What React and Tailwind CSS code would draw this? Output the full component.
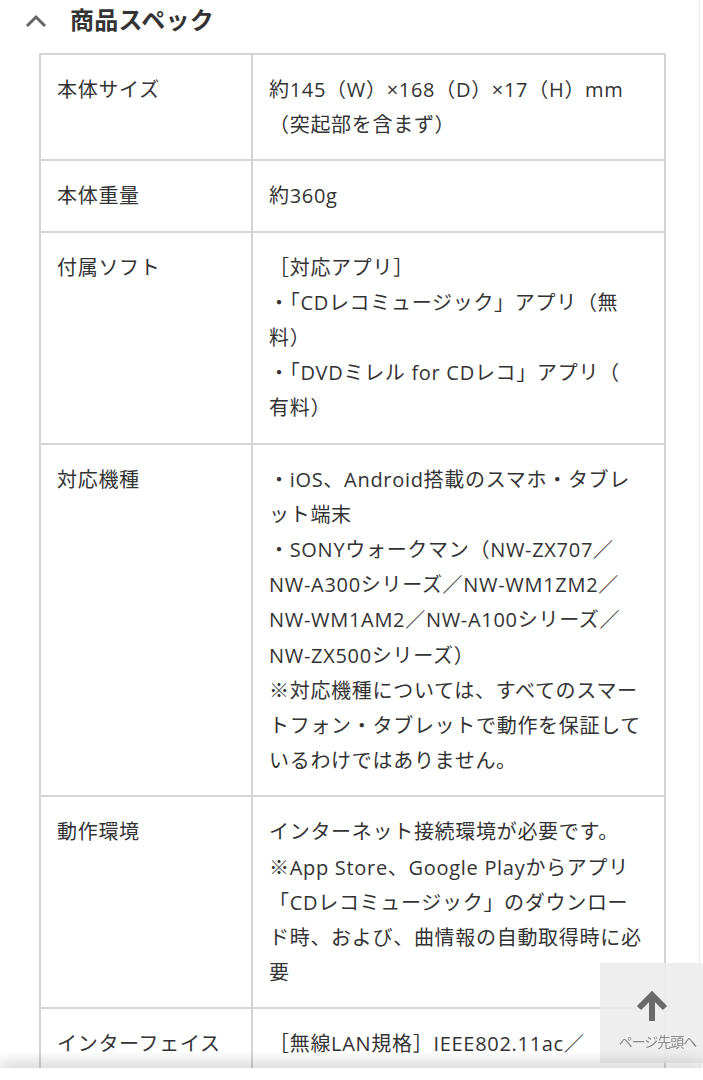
const specs = [
  {
    label: "本体サイズ",
    lines: ["約145（W）×168（D）×17（H）mm", "（突起部を含まず）"],
  },
  { label: "本体重量", lines: ["約360g"] },
  {
    label: "付属ソフト",
    lines: [
      "［対応アプリ］",
      "・「CDレコミュージック」アプリ（無",
      "料）",
      "・「DVDミレル for CDレコ」アプリ（",
      "有料）",
    ],
  },
  {
    label: "対応機種",
    lines: [
      "・iOS、Android搭載のスマホ・タブレ",
      "ット端末",
      "・SONYウォークマン（NW-ZX707／",
      "NW-A300シリーズ／NW-WM1ZM2／",
      "NW-WM1AM2／NW-A100シリーズ／",
      "NW-ZX500シリーズ）",
      "※対応機種については、すべてのスマー",
      "トフォン・タブレットで動作を保証して",
      "いるわけではありません。",
    ],
  },
  {
    label: "動作環境",
    lines: [
      "インターネット接続環境が必要です。",
      "※App Store、Google Playからアプリ",
      "「CDレコミュージック」のダウンロー",
      "ド時、および、曲情報の自動取得時に必",
      "要",
    ],
  },
  {
    label: "インターフェイス",
    lines: ["［無線LAN規格］IEEE802.11ac／"],
  },
];

function App() {
  return (
    <div
      className="relative min-h-screen bg-white text-[#333]"
      style={{ fontFamily: '"Open Sans", "Noto Sans CJK JP", sans-serif' }}
    >
      {/* HEADING */}
      <div className="flex items-center h-[40px] pl-[25px]">
        <svg width="22" height="14" viewBox="0 0 22 14" className="mr-[23px] mt-[1px]">
          <path d="M2 12 L11 3 L20 12" fill="none" stroke="#666" strokeWidth="3" />
        </svg>
        <h2 className="text-[24px] font-bold leading-none tracking-[0.3px]">商品スペック</h2>
      </div>

      {/* TABLE */}
      <table className="mt-[13px] ml-[39px] w-[627px] table-fixed border-collapse text-[20px] leading-[35.2px] tracking-[0.7px]">
        <colgroup>
          <col className="w-[212px]" />
          <col />
        </colgroup>
        <tbody>
          {specs.map((row, i) => (
            <tr key={i}>
              <td className="border-2 border-[#d4d4d4] align-top px-[16px] py-[17px] whitespace-nowrap">
                {row.label}
              </td>
              <td className="border-2 border-[#d4d4d4] align-top px-[16px] py-[17px]">
                {row.lines.map((l, j) => (
                  <div key={j} className="whitespace-nowrap">
                    {l}
                  </div>
                ))}
              </td>
            </tr>
          ))}
        </tbody>
      </table>

      {/* RIGHT EDGE LINE */}
      <div className="fixed top-0 bottom-0 left-[699px] w-px bg-[#ececec]" />

      {/* BACK TO TOP */}
      <div className="fixed left-[600px] top-[963px] w-[103px] h-[100px] bg-[#ececec]/90 flex flex-col items-center">
        <svg width="34" height="32" viewBox="0 0 34 32" className="mt-[28px]">
          <path d="M17 30 V5 M4 17 L17 4 L30 17" fill="none" stroke="#6a6a6a" strokeWidth="6" />
        </svg>
        <span className="mt-[12px] ml-[12px] text-[14px] leading-none tracking-[-1px] text-[#8a8a8a]">
          ページ先頭へ
        </span>
      </div>

      {/* BOTTOM BAR */}
      <div className="fixed left-0 right-0 bottom-0 h-[12px] bg-white shadow-[0_-6px_14px_rgba(0,0,0,0.18)]" />
    </div>
  );
}

export default App;
